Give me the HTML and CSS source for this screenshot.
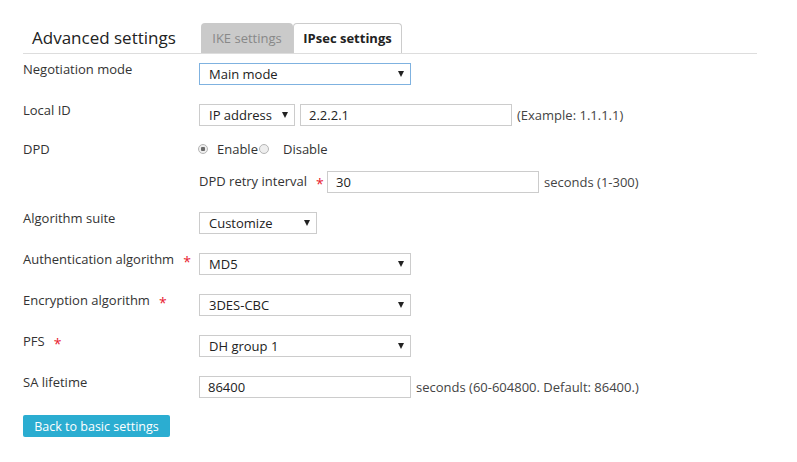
FILE: index.html
```html
<!DOCTYPE html>
<html lang="en">
<head>
  <meta charset="UTF-8">
  <title>Advanced settings</title>
  <link rel="stylesheet" href="styles.css">
</head>
<body>
  <div class="page">
    <div class="tabbar">
      <h2 class="title">Advanced settings</h2>
      <span class="tab">IKE settings</span>
      <span class="tab active">IPsec settings</span>
    </div>

    <form class="form">
      <div class="row">
        <label class="label">Negotiation mode</label>
        <div class="select wide focus"><span>Main mode</span></div>
      </div>

      <div class="row">
        <label class="label">Local ID</label>
        <div class="select idtype"><span>IP address</span></div>
        <input class="text" type="text" value="2.2.2.1">
        <span class="hint">(Example: 1.1.1.1)</span>
      </div>

      <div class="row dpd">
        <label class="label mid">DPD</label>
        <input class="radio" type="radio" name="dpd" checked>
        <span class="opt">Enable</span>
        <input class="radio" type="radio" name="dpd">
        <span class="opt">Disable</span>
      </div>

      <div class="row sub">
        <span class="sublabel">DPD retry interval<span class="req">*</span></span>
        <input class="text" type="text" value="30">
        <span class="hint">seconds (1-300)</span>
      </div>

      <div class="row">
        <label class="label">Algorithm suite</label>
        <div class="select suite"><span>Customize</span></div>
      </div>

      <div class="row">
        <label class="label">Authentication algorithm<span class="req">*</span></label>
        <div class="select wide"><span>MD5</span></div>
      </div>

      <div class="row">
        <label class="label">Encryption algorithm<span class="req">*</span></label>
        <div class="select wide"><span>3DES-CBC</span></div>
      </div>

      <div class="row">
        <label class="label">PFS<span class="req">*</span></label>
        <div class="select wide"><span>DH group 1</span></div>
      </div>

      <div class="row last">
        <label class="label">SA lifetime</label>
        <input class="text first" type="text" value="86400">
        <span class="hint">seconds (60-604800. Default: 86400.)</span>
      </div>

      <button type="button" class="back">Back to basic settings</button>
    </form>
  </div>
</body>
</html>
```

FILE: styles.css
```css
body {
  margin: 0;
  font-family: "Open Sans", "Noto Sans", sans-serif;
  font-size: 13px;
  color: #333;
  background: #fff;
}
.page {
  width: 734px;
  margin-left: 23px;
  padding-top: 23px;
}
.tabbar {
  display: flex;
  align-items: flex-end;
  height: 30px;
  border-bottom: 1px solid #ddd;
}
.title {
  width: 178px;
  box-sizing: border-box;
  margin: 0;
  padding-left: 9px;
  font-size: 17px;
  font-weight: normal;
  line-height: 30px;
  color: #222;
}
.tab {
  box-sizing: border-box;
  height: 30px;
  line-height: 30px;
  text-align: center;
  border-radius: 4px 4px 0 0;
}
.tab:not(.active) {
  width: 92px;
  background: #cacaca;
  color: #888;
}
.tab.active {
  width: 109px;
  background: #fff;
  border: 1px solid #ccc;
  border-bottom: none;
  font-weight: bold;
  color: #222;
  line-height: 29px;
}
.form {
  padding-top: 9px;
}
.row {
  display: flex;
  align-items: flex-start;
  height: 22px;
  margin-bottom: 19px;
}
.row.dpd {
  align-items: center;
  margin-top: -7px;
  margin-bottom: 11px;
}
.row.sub {
  align-items: center;
  padding-left: 176px;
}
.row.last {
  margin-bottom: 17px;
}
.label {
  flex: none;
  width: 176px;
  line-height: 16px;
  margin-top: -2px;
}
.label.mid {
  margin-top: 0;
}
.sublabel {
  width: 128px;
  flex: none;
}
.req {
  color: #e8212f;
  margin-left: 9px;
  font-size: 14px;
  vertical-align: -3px;
}
.select {
  position: relative;
  box-sizing: border-box;
  height: 22px;
  line-height: 20px;
  padding: 0 9px;
  border: 1px solid #ccc;
  color: #222;
}
.select::after {
  content: "";
  position: absolute;
  right: 6px;
  top: 7px;
  border-left: 3.5px solid transparent;
  border-right: 3.5px solid transparent;
  border-top: 6px solid #222;
}
.select.focus {
  border-color: #7fb2e0;
}
.select.wide {
  width: 212px;
}
.select.idtype {
  width: 96px;
}
.select.suite {
  width: 118px;
}
.text {
  box-sizing: border-box;
  width: 212px;
  height: 22px;
  margin: 0 0 0 5px;
  padding: 0 8px;
  border: 1px solid #ccc;
  font: inherit;
  color: #222;
  outline: none;
}
.sub .text,
.text.first {
  margin-left: 0;
}
.hint {
  margin-left: 5px;
  line-height: 22px;
  color: #444;
}
.radio {
  appearance: none;
  box-sizing: border-box;
  width: 10px;
  height: 10px;
  margin: 0 0 0 -1px;
  border: 1px solid #b5b5b5;
  border-radius: 50%;
  background: #eee;
}
.radio:checked {
  background: radial-gradient(circle, #6a6a6a 0 2px, #eee 2.5px);
}
.opt {
  margin: 0 1px 0 9px;
}
.opt + .radio {
  margin-left: 0;
}
.opt:last-child {
  margin-left: 14px;
}
.back {
  width: 147px;
  height: 22px;
  padding: 0;
  border: none;
  border-radius: 2px;
  background: #2badd1;
  color: #fff;
  font: inherit;
  font-size: 12.5px;
  cursor: pointer;
}
```
